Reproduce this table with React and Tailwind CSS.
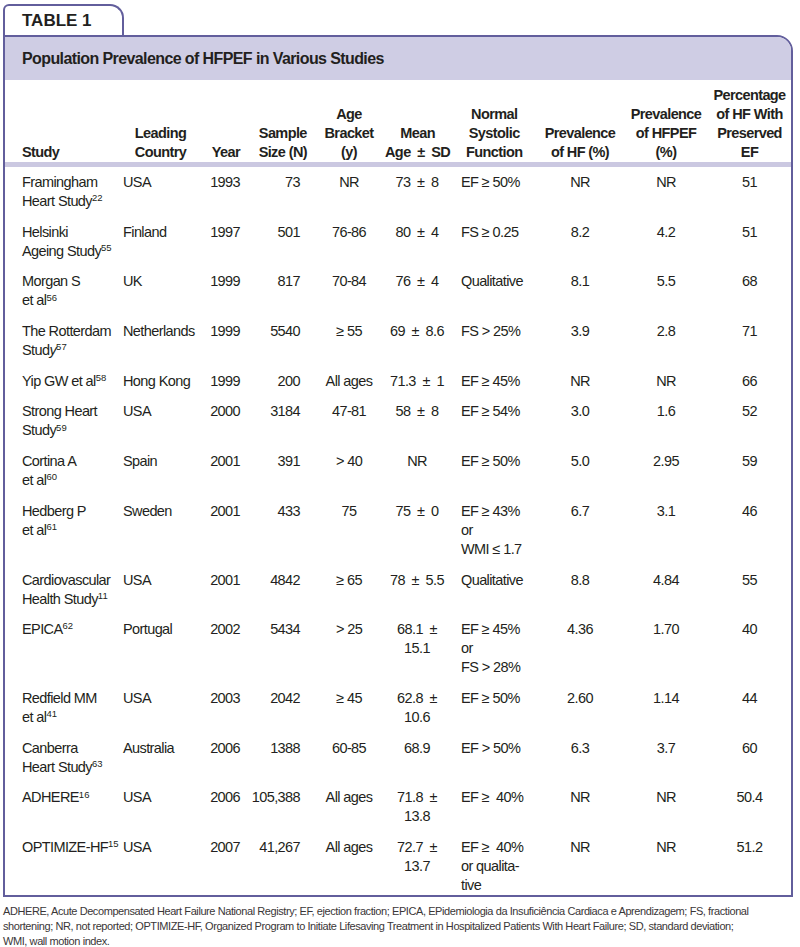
import React from 'react'

const BORDER = 'border-[#625e9c]'

// column tracks, x from 22 to 787
const COLS = 'grid grid-cols-[101px_75px_45px_70px_72px_64px_91px_80px_92px_75px]'

const DATA_ALIGN = [
  'text-left',
  'text-left',
  'text-right pr-[3px]',
  'text-right pr-[13px]',
  'text-center',
  'text-center',
  'text-left pl-[12px]',
  'text-center',
  'text-center',
  'text-center',
]

const HEAD_ALIGN = [
  'text-left',
  'text-center',
  'text-right pr-[3px]',
  'text-right pr-[6px]',
  'text-center',
  'text-center',
  'text-left pl-[17px]',
  'text-center',
  'text-center',
  'text-center',
]

// ± with wider side spacing, as set in the print table
const PM = '\u2002\u00b1\u2002'

const HEADERS = [
  ['Study'],
  ['Leading', 'Country'],
  ['Year'],
  ['Sample', 'Size (N)'],
  ['Age', 'Bracket', '(y)'],
  ['Mean', `Age${PM}SD`],
  ['Normal', 'Systolic', 'Function'],
  ['Prevalence', 'of HF (%)'],
  ['Prevalence', 'of HFPEF', '(%)'],
  ['Percentage', 'of HF With', 'Preserved', 'EF'],
]

const Sup = ({ n }) => <sup className="text-[9.5px] tracking-normal">{n}</sup>

const ROWS = [
  [['Framingham', <>Heart Study<Sup n="22" /></>], ['USA'], ['1993'], ['73'], ['NR'], [`73${PM}8`], ['EF \u2265 50%'], ['NR'], ['NR'], ['51']],
  [['Helsinki', <>Ageing Study<Sup n="55" /></>], ['Finland'], ['1997'], ['501'], ['76-86'], [`80${PM}4`], ['FS \u2265 0.25'], ['8.2'], ['4.2'], ['51']],
  [['Morgan S', <>et al<Sup n="56" /></>], ['UK'], ['1999'], ['817'], ['70-84'], [`76${PM}4`], ['Qualitative'], ['8.1'], ['5.5'], ['68']],
  [['The Rotterdam', <>Stud<i>y</i><Sup n="57" /></>], ['Netherlands'], ['1999'], ['5540'], ['\u2265 55'], [`69${PM}8.6`], ['FS > 25%'], ['3.9'], ['2.8'], ['71']],
  [[<>Yip GW et al<Sup n="58" /></>], ['Hong Kong'], ['1999'], ['200'], ['All ages'], [`71.3${PM}1`], ['EF \u2265 45%'], ['NR'], ['NR'], ['66']],
  [['Strong Heart', <>Study<Sup n="59" /></>], ['USA'], ['2000'], ['3184'], ['47-81'], [`58${PM}8`], ['EF \u2265 54%'], ['3.0'], ['1.6'], ['52']],
  [['Cortina A', <>et al<Sup n="60" /></>], ['Spain'], ['2001'], ['391'], ['> 40'], ['NR'], ['EF \u2265 50%'], ['5.0'], ['2.95'], ['59']],
  [['Hedberg P', <>et al<Sup n="61" /></>], ['Sweden'], ['2001'], ['433'], ['75'], [`75${PM}0`], ['EF \u2265 43%', 'or', 'WMI \u2264 1.7'], ['6.7'], ['3.1'], ['46']],
  [['Cardiovascular', <>Health Study<Sup n="11" /></>], ['USA'], ['2001'], ['4842'], ['\u2265 65'], [`78${PM}5.5`], ['Qualitative'], ['8.8'], ['4.84'], ['55']],
  [[<>EPICA<Sup n="62" /></>], ['Portugal'], ['2002'], ['5434'], ['> 25'], ['68.1\u2002\u00b1', '15.1'], ['EF \u2265 45%', 'or', 'FS > 28%'], ['4.36'], ['1.70'], ['40']],
  [['Redfield MM', <>et al<Sup n="41" /></>], ['USA'], ['2003'], ['2042'], ['\u2265 45'], ['62.8\u2002\u00b1', '10.6'], ['EF \u2265 50%'], ['2.60'], ['1.14'], ['44']],
  [['Canberra', <>Heart Study<Sup n="63" /></>], ['Australia'], ['2006'], ['1388'], ['60-85'], ['68.9'], ['EF > 50%'], ['6.3'], ['3.7'], ['60']],
  [[<>ADHERE<Sup n="16" /></>], ['USA'], ['2006'], ['105,388'], ['All ages'], ['71.8\u2002\u00b1', '13.8'], ['EF \u2265\u00a0 40%'], ['NR'], ['NR'], ['50.4']],
  [[<>OPTIMIZE-HF<Sup n="15" /></>], ['USA'], ['2007'], ['41,267'], ['All ages'], ['72.7\u2002\u00b1', '13.7'], ['EF \u2265\u00a0 40%', 'or qualita-', 'tive'], ['NR'], ['NR'], ['51.2']],
]

function Lines({ lines }) {
  return lines.map((l, i) => (
    <React.Fragment key={i}>
      {i > 0 && <br />}
      {l}
    </React.Fragment>
  ))
}

export default function App() {
  return (
    <div className="w-[800px] h-[947px] bg-white text-[#231f20] font-['Liberation_Sans',Arial,sans-serif] overflow-hidden">
      <div className="ml-[3px] w-[790px]">
        {/* tab */}
        <div className={`mt-[4px] h-[31px] w-[121px] border-2 border-b-0 ${BORDER} rounded-tl-[6px] rounded-tr-[14px] flex items-center pl-[17px]`}>
          <span className="font-bold text-[17px] leading-none">TABLE 1</span>
        </div>

        {/* table box */}
        <div className={`border-2 ${BORDER} rounded-tr-[16px] overflow-hidden`}>
          <div className="h-[43px] bg-[#cfcde4] flex items-center pl-[17px]">
            <span className="font-bold text-[16px] tracking-[-0.6px] leading-none">Population Prevalence of HFPEF in Various Studies</span>
          </div>

          <div className={`${COLS} items-end pl-[17px] pt-[6px] text-[14.5px] tracking-[-0.6px] leading-[19px] font-bold`}>
            {HEADERS.map((h, i) => (
              <div key={i} className={`${HEAD_ALIGN[i]} whitespace-nowrap`}>
                <span className="inline-block text-center">
                  <Lines lines={h} />
                </span>
              </div>
            ))}
          </div>
          <div className="h-[5px] bg-[#cbc8e1]" />

          <div className="text-[14.5px] tracking-[-0.6px] leading-[19px]">
            {ROWS.map((row, r) => (
              <div key={r} className={`${COLS} items-start pl-[17px] pt-[6px] ${r === ROWS.length - 1 ? 'pb-0' : 'pb-[5.7px]'}`}>
                {row.map((cell, c) => (
                  <div key={c} className={`${DATA_ALIGN[c]} whitespace-nowrap`}>
                    <Lines lines={cell} />
                  </div>
                ))}
              </div>
            ))}
          </div>
        </div>

        {/* footnote */}
        <p className="mt-[7px] w-[797px] text-[11px] tracking-[-0.42px] leading-[15px] text-[#3a3637] whitespace-nowrap">
          ADHERE, Acute Decompensated Heart Failure National Registry; EF, ejection fraction; EPICA, EPidemiologia da Insuficiência Cardiaca e Aprendizagem; FS, fractional
          <br />
          shortening; NR, not reported; OPTIMIZE-HF, Organized Program to Initiate Lifesaving Treatment in Hospitalized Patients With Heart Failure; SD, standard deviation;
          <br />
          WMI, wall motion index.
        </p>
      </div>
    </div>
  )
}
